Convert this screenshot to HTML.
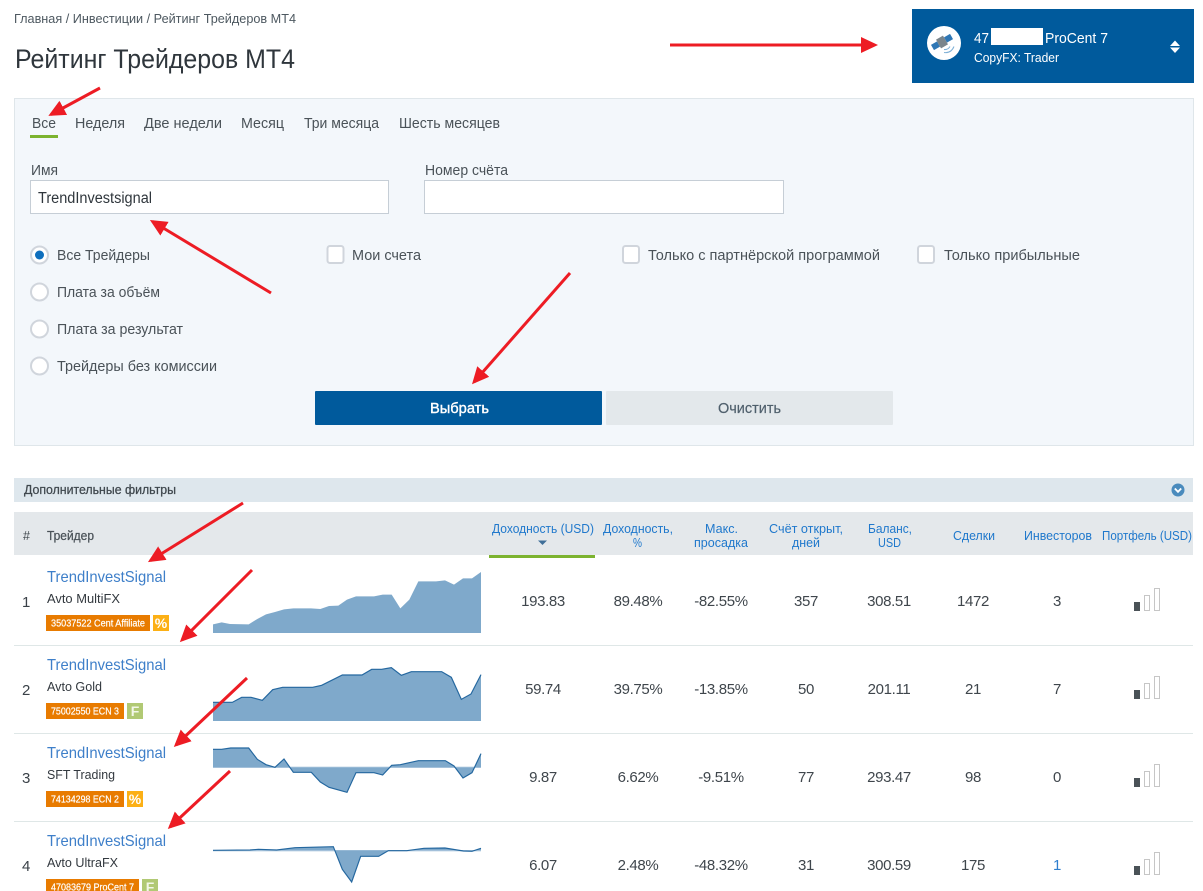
<!DOCTYPE html>
<html lang="ru">
<head>
<meta charset="utf-8">
<title>Рейтинг Трейдеров МТ4</title>
<style>
html,body{margin:0;padding:0;background:#fff;width:1203px;height:891px;overflow:hidden}
svg{display:block}
text{font-family:"Liberation Sans","DejaVu Sans",sans-serif;fill:#3a4148}
.t{font-size:15px;fill:#4a5258}
.h{font-size:12.5px;fill:#1f78cc}
.v{font-size:15px;fill:#3f464c;text-anchor:middle;letter-spacing:-.35px}
.n{font-size:16px;fill:#3e7fc9}
.s{font-size:13px;fill:#33393f}
.tg{font-size:10px;fill:#fff;stroke:#fff;stroke-width:.2px}
.ch{fill:#7fa9cb;stroke:none}
.rad{fill:#fff;stroke:#d0d5dc;stroke-width:2}
.arr{stroke:#ed1c24;stroke-width:3;fill:none;marker-end:url(#ah)}
.m{stroke-width:.25px}
</style>
</head>
<body>
<svg width="1203" height="891" viewBox="0 0 1203 891" xmlns="http://www.w3.org/2000/svg">
<defs>
<marker id="ah" markerUnits="userSpaceOnUse" markerWidth="20" markerHeight="18" refX="14" refY="8" orient="auto">
<path d="M0 0L17 8L0 16Z" fill="#ed1c24"/>
</marker>
<g id="bars">
<rect x="1134" y="602" width="6" height="9" fill="#4a5257"/>
<rect x="1144.5" y="595.5" width="5" height="15" fill="#fff" stroke="#c6c6c6"/>
<rect x="1154.5" y="588.5" width="5" height="22" fill="#fff" stroke="#c6c6c6"/>
</g>
</defs>

<text x="14" y="23" font-size="13" textLength="282" lengthAdjust="spacingAndGlyphs" style="fill:#4d5860">Главная / Инвестиции / Рейтинг Трейдеров МТ4</text>
<text x="15" y="68" font-size="27" textLength="280" lengthAdjust="spacingAndGlyphs" style="fill:#2f363c">Рейтинг Трейдеров МТ4</text>

<!-- account box -->
<rect x="912" y="9" width="282" height="74" fill="#005a9c"/>
<circle cx="944" cy="43" r="17" fill="#fff"/>
<g transform="rotate(-30 942 42)">
<rect x="931" y="39" width="7" height="6" fill="#2f77b5"/>
<rect x="946" y="39" width="7" height="6" fill="#2f77b5"/>
<rect x="938" y="37" width="8" height="10" fill="#7a858c"/>
</g>
<path d="M944 49.500q4 .5 6-3M944 52.500q7 1 10-6" fill="none" stroke="#7fb0d6" stroke-width="1"/>
<text x="974" y="43" font-size="15" textLength="15" lengthAdjust="spacingAndGlyphs" style="fill:#fff">47</text>
<rect x="991" y="28" width="52" height="17" fill="#fff"/>
<text x="1045" y="43" font-size="15" textLength="63" lengthAdjust="spacingAndGlyphs" style="fill:#fff">ProCent 7</text>
<text x="974" y="62" font-size="13" textLength="85" lengthAdjust="spacingAndGlyphs" style="fill:#fff">CopyFX: Trader</text>
<path d="M1170 46L1175 40.500L1180 46ZM1170 47.500L1180 47.500L1175 53Z" fill="#fff"/>

<!-- filter panel -->
<rect x="14.500" y="98.500" width="1179" height="347" fill="#f3f7fb" stroke="#dfe6ea"/>
<text class="t" x="32" y="128" textLength="24" lengthAdjust="spacingAndGlyphs">Все</text>
<rect x="30" y="135" width="28" height="3" fill="#7cb32f"/>
<text class="t" x="75" y="128" textLength="50" lengthAdjust="spacingAndGlyphs">Неделя</text>
<text class="t" x="144" y="128" textLength="78" lengthAdjust="spacingAndGlyphs">Две недели</text>
<text class="t" x="241" y="128" textLength="43" lengthAdjust="spacingAndGlyphs">Месяц</text>
<text class="t" x="304" y="128" textLength="75" lengthAdjust="spacingAndGlyphs">Три месяца</text>
<text class="t" x="399" y="128" textLength="101" lengthAdjust="spacingAndGlyphs">Шесть месяцев</text>

<text class="t" x="31" y="175" textLength="27" lengthAdjust="spacingAndGlyphs">Имя</text>
<text class="t" x="425" y="175" textLength="83" lengthAdjust="spacingAndGlyphs">Номер счёта</text>
<rect x="30.500" y="180.500" width="358" height="33" fill="#fff" stroke="#c6ced6"/>
<rect x="424.500" y="180.500" width="359" height="33" fill="#fff" stroke="#c6ced6"/>
<text x="38" y="203" font-size="15.500" textLength="114" lengthAdjust="spacingAndGlyphs" style="fill:#2f363c">TrendInvestsignal</text>

<circle class="rad" cx="39.500" cy="255" r="8.500"/><circle cx="39.500" cy="255" r="4.500" fill="#0f6fbd"/>
<circle class="rad" cx="39.500" cy="292" r="8.500"/>
<circle class="rad" cx="39.500" cy="329" r="8.500"/>
<circle class="rad" cx="39.500" cy="366" r="8.500"/>
<text class="t" x="57" y="260" textLength="93" lengthAdjust="spacingAndGlyphs">Все Трейдеры</text>
<text class="t" x="57" y="297" textLength="103" lengthAdjust="spacingAndGlyphs">Плата за объём</text>
<text class="t" x="57" y="334" textLength="126" lengthAdjust="spacingAndGlyphs">Плата за результат</text>
<text class="t" x="57" y="371" textLength="160" lengthAdjust="spacingAndGlyphs">Трейдеры без комиссии</text>

<rect class="rad" x="327.500" y="246" width="16" height="17" rx="2.500"/>
<rect class="rad" x="623" y="246" width="16" height="17" rx="2.500"/>
<rect class="rad" x="918" y="246" width="16" height="17" rx="2.500"/>
<text class="t" x="352" y="260" textLength="69" lengthAdjust="spacingAndGlyphs">Мои счета</text>
<text class="t" x="648" y="260" textLength="232" lengthAdjust="spacingAndGlyphs">Только с партнёрской программой</text>
<text class="t" x="944" y="260" textLength="136" lengthAdjust="spacingAndGlyphs">Только прибыльные</text>

<rect x="315" y="391" width="287" height="34" rx="1" fill="#005a9c"/>
<rect x="606" y="391" width="287" height="34" rx="1" fill="#e3e8eb"/>
<text x="430" y="413" font-size="15" textLength="59" lengthAdjust="spacingAndGlyphs" style="fill:#fff;stroke:#fff;stroke-width:.4px">Выбрать</text>
<text x="718" y="413" font-size="15" textLength="63" lengthAdjust="spacingAndGlyphs" style="fill:#4f5f6c;stroke:#4f5f6c;stroke-width:.2px">Очистить</text>

<!-- extra filters -->
<rect x="14" y="478" width="1179" height="24" fill="#dee7ed"/>
<text x="24" y="494" font-size="12.500" textLength="152" lengthAdjust="spacingAndGlyphs" class="m" style="fill:#3f474d;stroke:#3f474d">Дополнительные фильтры</text>
<circle cx="1178" cy="490" r="6.500" fill="#4a8bbd"/>
<path d="M1174.800 488.500L1178 491.800L1181.200 488.500" fill="none" stroke="#fff" stroke-width="1.800"/>

<!-- table head -->
<rect x="14" y="512" width="1179" height="43" fill="#e4e8eb"/>
<text x="23" y="540" font-size="12.500" style="fill:#3f474d">#</text>
<text x="47" y="540" font-size="12.500" textLength="47" lengthAdjust="spacingAndGlyphs" class="m" style="fill:#4a5258;stroke:#4a5258">Трейдер</text>
<text class="h" x="492" y="533" textLength="102" lengthAdjust="spacingAndGlyphs">Доходность (USD)</text>
<path d="M538 540.500L547 540.500L542.500 545Z" fill="#3f6f99"/>
<rect x="489" y="555" width="106" height="3" fill="#7cb32f"/>
<text class="h" x="603" y="533" textLength="70" lengthAdjust="spacingAndGlyphs">Доходность,</text>
<text class="h" x="633" y="547" textLength="9" lengthAdjust="spacingAndGlyphs">%</text>
<text class="h" x="705" y="533" textLength="33" lengthAdjust="spacingAndGlyphs">Макс.</text>
<text class="h" x="694" y="547" textLength="54" lengthAdjust="spacingAndGlyphs">просадка</text>
<text class="h" x="769" y="533" textLength="74" lengthAdjust="spacingAndGlyphs">Счёт открыт,</text>
<text class="h" x="792" y="547" textLength="28" lengthAdjust="spacingAndGlyphs">дней</text>
<text class="h" x="868" y="533" textLength="44" lengthAdjust="spacingAndGlyphs">Баланс,</text>
<text class="h" x="878" y="547" textLength="23" lengthAdjust="spacingAndGlyphs">USD</text>
<text class="h" x="953" y="540" textLength="42" lengthAdjust="spacingAndGlyphs">Сделки</text>
<text class="h" x="1024" y="540" textLength="68" lengthAdjust="spacingAndGlyphs">Инвесторов</text>
<text class="h" x="1102" y="540" textLength="90" lengthAdjust="spacingAndGlyphs">Портфель (USD)</text>

<!-- separators -->
<rect x="14" y="645" width="1179" height="1" fill="#dfe7e7"/>
<rect x="14" y="733" width="1179" height="1" fill="#dfe7e7"/>
<rect x="14" y="821" width="1179" height="1" fill="#dfe7e7"/>

<!-- charts -->
<g transform="translate(0 470) scale(.3333333)">
<path class="ch" d="M639 489L639 463L665 457L690 462L746 463L772 447L798 433L825 426L852 418L880 415L933 415L961 417L987 408L1015 407L1041 389L1068 379L1122 379L1148 374L1175 374L1201 415L1228 389L1255 334L1308 334L1335 331L1362 344L1389 325L1416 325L1443 306L1443 489Z"/>
</g>
<g transform="translate(0 640) scale(.3333333)">
<path class="ch" d="M639 243L639 187L697 187L725 172L753 172L787 181L818 149L848 142L938 142L965 136L1027 105L1086 105L1115 88L1145 88L1174 83L1204 106L1234 95L1325 95L1354 112L1384 178L1413 162L1443 104L1443 243Z"/>
<path style="fill:none;stroke:#24679f;stroke-width:3.500" d="M639 187L697 187L725 172L753 172L787 181L818 149L848 142L938 142L965 136L1027 105L1086 105L1115 88L1145 88L1174 83L1204 106L1234 95L1325 95L1354 112L1384 178L1413 162L1443 104"/>

<path d="M639 382L1443 382" stroke="#b9cfe2" stroke-width="4" fill="none"/>
<path class="ch" d="M639 382L639 328L665 328L692 324L746 324L772 358L798 374L825 382L852 357L880 397L934 397L961 426L987 442L1041 457L1068 398L1122 398L1148 405L1175 376L1201 374L1255 362L1336 362L1362 378L1389 414L1416 398L1443 341L1443 382Z"/>
<path style="fill:none;stroke:#24679f;stroke-width:3.500" d="M639 328L665 328L692 324L746 324L772 358L798 374L825 382L852 357L880 397L934 397L961 426L987 442L1041 457L1068 398L1122 398L1148 405L1175 376L1201 374L1255 362L1336 362L1362 378L1389 414L1416 398L1443 341"/>

<path d="M639 632L1443 632" stroke="#b9cfe2" stroke-width="4" fill="none"/>
<path class="ch" d="M639 631L750 630L775 628L830 630L885 623L1000 620L1027 688L1055 726L1082 649L1136 649L1165 632L1220 632L1272 625L1335 624L1390 633L1416 634L1443 625L1443 631Z"/>
<path style="fill:none;stroke:#24679f;stroke-width:3.500" d="M639 631L750 630L775 628L830 630L885 623L1000 620L1027 688L1055 726L1082 649L1136 649L1165 632L1220 632L1272 625L1335 624L1390 633L1416 634L1443 625"/>
</g>

<!-- row 1 -->
<text x="22" y="607" font-size="15">1</text>
<text class="n" x="47" y="582" textLength="119" lengthAdjust="spacingAndGlyphs">TrendInvestSignal</text>
<text class="s" x="47" y="603" textLength="73" lengthAdjust="spacingAndGlyphs">Avto MultiFX</text>
<rect x="46" y="615" width="104" height="16" fill="#e87b00"/>
<text class="tg" x="51" y="626.500" textLength="94" lengthAdjust="spacingAndGlyphs">35037522 Cent Affiliate</text>
<rect x="153" y="615" width="16" height="16" fill="#fcb015"/>
<text x="161" y="628" font-size="14" font-weight="bold" text-anchor="middle" style="fill:#fff">%</text>
<text class="v" x="543" y="606">193.83</text>
<text class="v" x="638" y="606">89.48%</text>
<text class="v" x="721" y="606">-82.55%</text>
<text class="v" x="806" y="606">357</text>
<text class="v" x="889" y="606">308.51</text>
<text class="v" x="973" y="606">1472</text>
<text class="v" x="1057" y="606">3</text>
<use href="#bars"/>

<!-- row 2 -->
<text x="22" y="695" font-size="15">2</text>
<text class="n" x="47" y="670" textLength="119" lengthAdjust="spacingAndGlyphs">TrendInvestSignal</text>
<text class="s" x="47" y="691" textLength="55" lengthAdjust="spacingAndGlyphs">Avto Gold</text>
<rect x="46" y="703" width="78" height="16" fill="#e87b00"/>
<text class="tg" x="51" y="714.500" textLength="68" lengthAdjust="spacingAndGlyphs">75002550 ECN 3</text>
<rect x="127" y="703" width="16" height="16" fill="#b1c974"/>
<text x="135" y="716" font-size="14" font-weight="bold" text-anchor="middle" style="fill:#f3f7e8">F</text>
<text class="v" x="543" y="694">59.74</text>
<text class="v" x="638" y="694">39.75%</text>
<text class="v" x="721" y="694">-13.85%</text>
<text class="v" x="806" y="694">50</text>
<text class="v" x="889" y="694">201.11</text>
<text class="v" x="973" y="694">21</text>
<text class="v" x="1057" y="694">7</text>
<use href="#bars" y="88"/>

<!-- row 3 -->
<text x="22" y="783" font-size="15">3</text>
<text class="n" x="47" y="758" textLength="119" lengthAdjust="spacingAndGlyphs">TrendInvestSignal</text>
<text class="s" x="47" y="779" textLength="68" lengthAdjust="spacingAndGlyphs">SFT Trading</text>
<rect x="46" y="791" width="78" height="16" fill="#e87b00"/>
<text class="tg" x="51" y="802.500" textLength="68" lengthAdjust="spacingAndGlyphs">74134298 ECN 2</text>
<rect x="127" y="791" width="16" height="16" fill="#fcb015"/>
<text x="135" y="804" font-size="14" font-weight="bold" text-anchor="middle" style="fill:#fff">%</text>
<text class="v" x="543" y="782">9.87</text>
<text class="v" x="638" y="782">6.62%</text>
<text class="v" x="721" y="782">-9.51%</text>
<text class="v" x="806" y="782">77</text>
<text class="v" x="889" y="782">293.47</text>
<text class="v" x="973" y="782">98</text>
<text class="v" x="1057" y="782">0</text>
<use href="#bars" y="176"/>

<!-- row 4 -->
<text x="22" y="871" font-size="15">4</text>
<text class="n" x="47" y="846" textLength="119" lengthAdjust="spacingAndGlyphs">TrendInvestSignal</text>
<text class="s" x="47" y="867" textLength="71" lengthAdjust="spacingAndGlyphs">Avto UltraFX</text>
<rect x="46" y="879" width="93" height="16" fill="#e87b00"/>
<text class="tg" x="51" y="890.500" textLength="83" lengthAdjust="spacingAndGlyphs">47083679 ProCent 7</text>
<rect x="142" y="879" width="16" height="16" fill="#b1c974"/>
<text x="150" y="892" font-size="14" font-weight="bold" text-anchor="middle" style="fill:#f3f7e8">F</text>
<text class="v" x="543" y="870">6.07</text>
<text class="v" x="638" y="870">2.48%</text>
<text class="v" x="721" y="870">-48.32%</text>
<text class="v" x="806" y="870">31</text>
<text class="v" x="889" y="870">300.59</text>
<text class="v" x="973" y="870">175</text>
<text class="v" x="1057" y="870" style="fill:#2f7fce">1</text>
<use href="#bars" y="264"/>

<!-- arrows -->
<line class="arr" x1="670" y1="45" x2="875" y2="45"/>
<line class="arr" x1="100" y1="88" x2="51" y2="114.500"/>
<line class="arr" x1="271" y1="293" x2="152.500" y2="221.500"/>
<line class="arr" x1="570" y1="273" x2="474" y2="382"/>
<line class="arr" x1="243" y1="503" x2="150.500" y2="560.500"/>
<line class="arr" x1="252" y1="570" x2="182" y2="640"/>
<line class="arr" x1="247" y1="678" x2="176" y2="745"/>
<line class="arr" x1="230" y1="771" x2="170" y2="827"/>
</svg>
</body>
</html>
